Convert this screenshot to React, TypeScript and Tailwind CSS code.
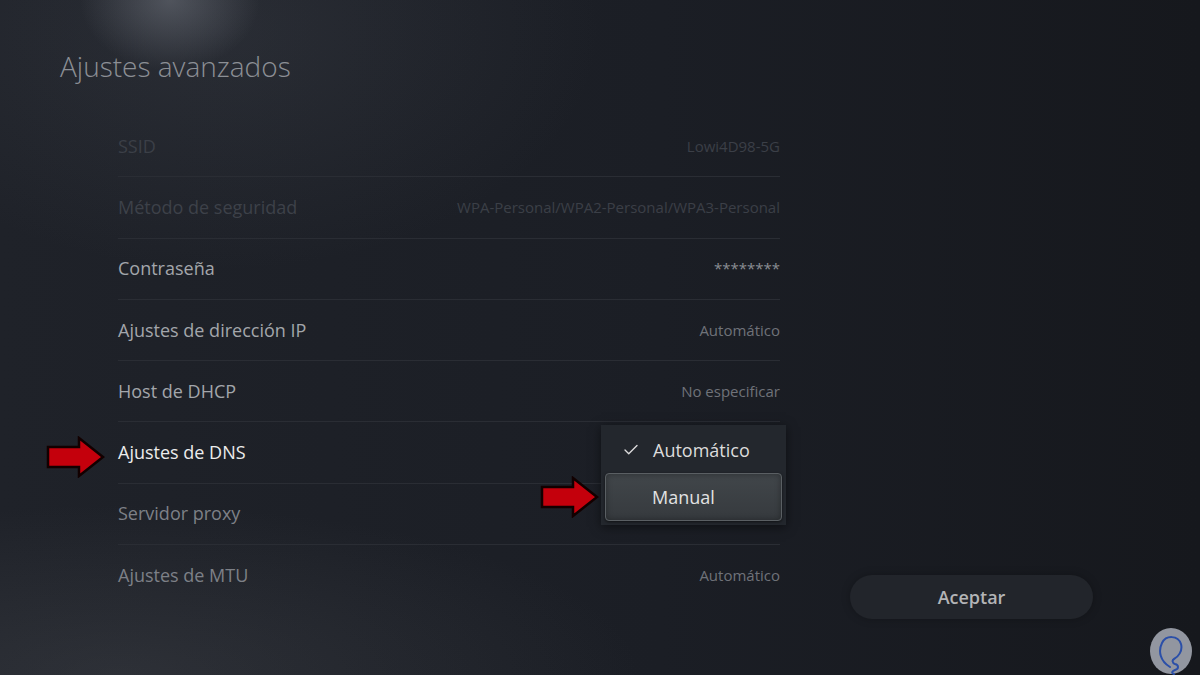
import { Check } from "lucide-react"

const rows = [
  { label: "SSID", value: "Lowi4D98-5G", lc: "text-[#3b3f47]", vc: "text-[#3b3f47]" },
  { label: "Método de seguridad", value: "WPA-Personal/WPA2-Personal/WPA3-Personal", lc: "text-[#3d4149]", vc: "text-[#3b3f47]" },
  { label: "Contraseña", value: "********", lc: "text-[#a3a6ab]", vc: "text-[#8a8d93]" },
  { label: "Ajustes de dirección IP", value: "Automático", lc: "text-[#a3a6ab]", vc: "text-[#6f7279]" },
  { label: "Host de DHCP", value: "No especificar", lc: "text-[#a3a6ab]", vc: "text-[#6f7279]" },
  { label: "Ajustes de DNS", value: "", lc: "text-[#ececec]", vc: "", dns: true },
  { label: "Servidor proxy", value: "", lc: "text-[#7d8087]", vc: "" },
  { label: "Ajustes de MTU", value: "Automático", lc: "text-[#7d8087]", vc: "text-[#6f7279]" },
]

function RedArrow({ className }: { className: string }) {
  return (
    <svg className={className} width="60" height="42" viewBox="0 0 60 42">
      <path
        d="M2 11 H33 V2 L57 21 L33 40 V31 H2 Z"
        fill="#c4000c"
        stroke="#120000"
        strokeWidth="2.5"
        strokeLinejoin="miter"
      />
    </svg>
  )
}

export default function App() {
  return (
    <div
      className="relative w-[1200px] h-[675px] overflow-hidden font-['Open_Sans',sans-serif] bg-[radial-gradient(ellipse_90px_70px_at_170px_0px,rgba(140,145,155,0.4),transparent),radial-gradient(ellipse_380px_240px_at_220px_30px,rgba(90,95,105,0.2),transparent),radial-gradient(ellipse_520px_170px_at_120px_675px,rgba(85,88,94,0.28),transparent),linear-gradient(90deg,#1f2229,#1b1e25_55%,#16181d)]"
    >
      <div className="pl-[60px] pt-[46px] h-[116px]">
        <h1 className="text-[28px] leading-[40px] font-light text-[#8c8f95]">Ajustes avanzados</h1>
      </div>

      <div className="flex">
        <div className="ml-[118px] w-[662px] flex flex-col">
          {rows.map((r, i) => (
            <div
              key={r.label}
              className={`relative flex items-center justify-between h-[61.3px] ${i < rows.length - 1 ? "border-b border-[#2a2d34]" : ""}`}
            >
              <span className={`text-[18px] ${r.lc}`}>{r.label}</span>
              {r.value && <span className={`text-[15px] ${r.vc}`}>{r.value}</span>}
              {r.dns && (
                <>
                  <RedArrow className="absolute left-[-72px] top-[14px]" />
                  <div className="absolute right-[-6px] top-[3px] w-[185px] h-[100px] bg-[#23272d] shadow-[0_2px_10px_rgba(0,0,0,0.5)] flex flex-col px-[4px] pt-[2px] z-10">
                    <div className="flex items-center h-[46px] pl-[17px] gap-[13px] text-[18px] text-[#dcdcdc]">
                      <Check size={18} strokeWidth={1.8} className="text-[#dcdcdc]" />
                      <span>Automático</span>
                    </div>
                    <div className="relative flex items-center h-[48px] pl-[46px] text-[18px] text-[#e2e2e2] rounded-[4px] border border-[#5a5f63] bg-[linear-gradient(180deg,#41464a,#363a3e)] shadow-[inset_0_0_6px_rgba(0,0,0,0.35),0_1px_3px_rgba(0,0,0,0.6)]">
                      Manual
                      <RedArrow className="absolute left-[-66px] top-[2px]" />
                    </div>
                  </div>
                </>
              )}
            </div>
          ))}
        </div>

        <div className="flex flex-col justify-end pl-[70px]">
          <button className="mb-[-13px] w-[243px] h-[44px] rounded-full bg-[#22252b] text-[18px] font-semibold text-[#b3b4b6] shadow-[0_0_8px_rgba(0,0,0,0.25)]">
            Aceptar
          </button>
        </div>
      </div>

      <svg className="absolute left-[1148px] top-[627px]" width="46" height="50" viewBox="0 0 46 50">
        <ellipse cx="23" cy="24" rx="21" ry="23" fill="#9296a0" />
        <path
          d="M22 40 C12 34 10 24 14 16 C18 8 30 8 33 17 C35 24 30 30 26 32 C24 33 24 36 27 37 C31 38 31 42 27 43 C24 44 23 46 26 47"
          fill="none"
          stroke="#2b4fa8"
          strokeWidth="2"
          strokeLinecap="round"
        />
      </svg>
    </div>
  )
}
